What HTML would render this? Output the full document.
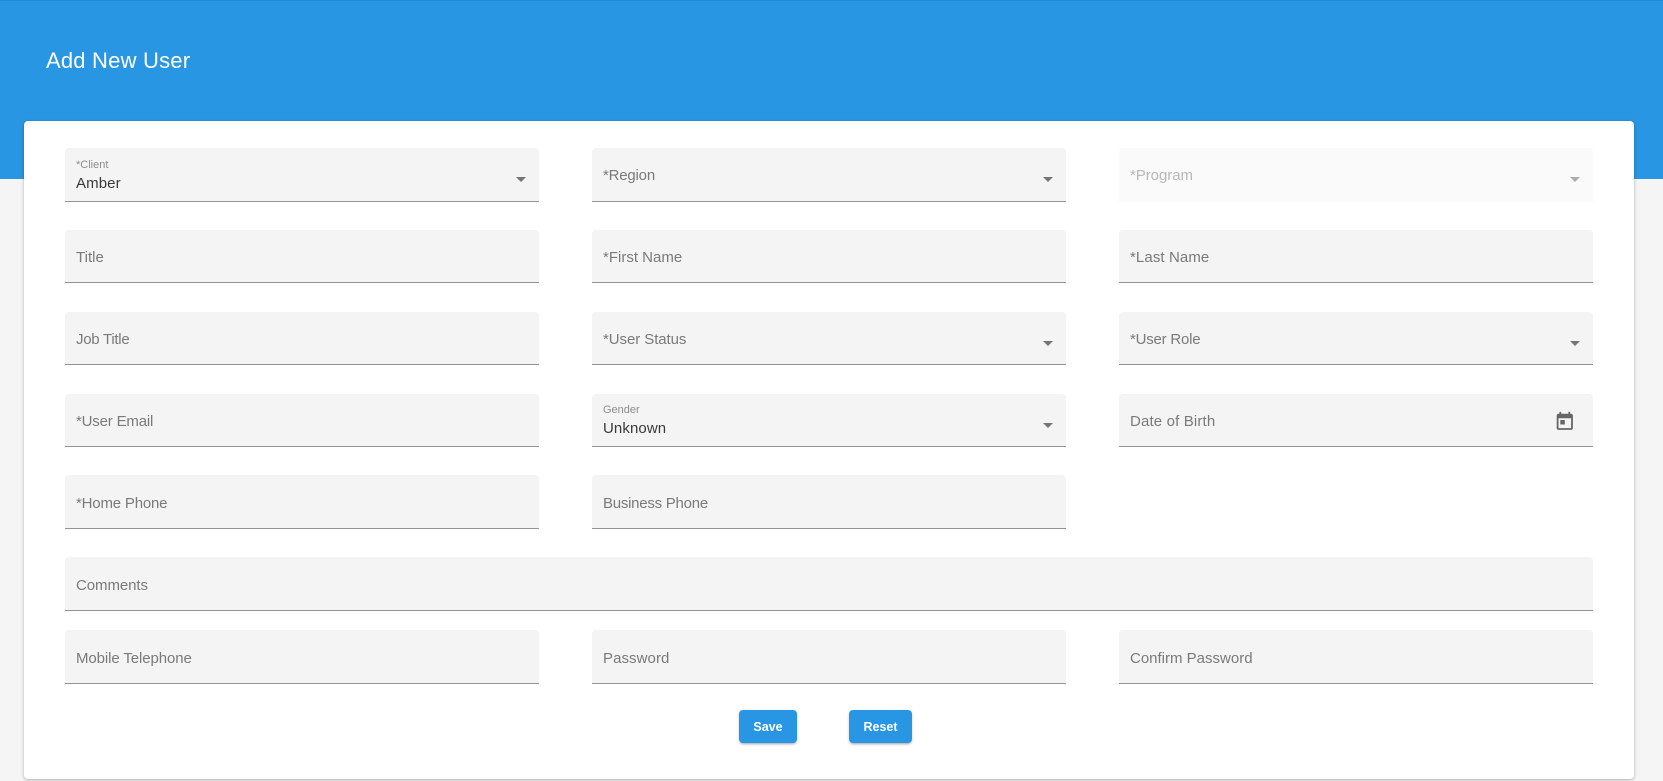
<!DOCTYPE html>
<html>
<head>
<meta charset="utf-8">
<title>Add New User</title>
<style>
html,body{margin:0;padding:0;width:1663px;height:781px;overflow:hidden;background:#f5f5f5;font-family:"Liberation Sans",sans-serif}
.hdr{position:absolute;left:0;top:0;width:1663px;height:179px;background:#2996e3;border-top:1px solid #2289d4;box-sizing:border-box}
.ttl{position:absolute;left:46px;top:47px;font-size:22px;line-height:26px;color:#fff;letter-spacing:.2px;white-space:nowrap}
.card{position:absolute;left:24px;top:121px;width:1610px;height:658px;background:#fff;border-radius:4px;box-shadow:0 1px 3px rgba(0,0,0,.3)}
.f{position:absolute;width:474px;height:54px;background:#f4f4f4;border-radius:4px 4px 0 0;border-bottom:1px solid #949494;box-sizing:border-box}
.s{height:53px}
.c1{left:65px}.c2{left:592px}.c3{left:1119px}
.f span{position:absolute;left:11px;top:1px;line-height:53px;font-size:15px;color:#7a7a7a;white-space:nowrap}
.f.sel span{top:0}
.f.dis{background:#fafafa;border-bottom:0}
.f.dis span{color:#b8b8b8}
.f i{position:absolute;right:13px;top:29px;width:0;height:0;border-left:5px solid transparent;border-right:5px solid transparent;border-top:5px solid #757575}
.f.dis i{border-top-color:#acacac}
.sm{position:absolute;left:11px;line-height:13px;font-size:11px;color:#8d8d8d}
.val{position:absolute;left:11px;line-height:18px;font-size:15px;color:#3a3a3a;letter-spacing:.1px}
.f svg{position:absolute;left:434.5px;top:17px}
.btn{position:absolute;top:710px;height:33px;background:#2996e3;border-radius:4px;color:#fff;font-size:12.5px;font-weight:bold;line-height:34px;text-align:center;box-shadow:0 2px 2px -1px rgba(0,0,0,.25),0 1px 3px rgba(0,0,0,.15)}
</style>
</head>
<body>
<div class="hdr"><div class="ttl">Add New User</div></div>
<div class="card"></div>

<div class="f sel c1" style="top:148px"><div class="sm" style="top:11px">*Client</div><div class="val" style="top:27px">Amber</div><i></i></div>
<div class="f sel c2" style="top:148px"><span style="top:1px;letter-spacing:-.2px">*Region</span><i></i></div>
<div class="f sel dis c3" style="top:148px"><span style="top:1px;letter-spacing:-.05px">*Program</span><i></i></div>

<div class="f s c1" style="top:230px"><span>Title</span></div>
<div class="f s c2" style="top:230px"><span>*First Name</span></div>
<div class="f s c3" style="top:230px"><span style="letter-spacing:.1px">*Last Name</span></div>

<div class="f s c1" style="top:312px"><span style="letter-spacing:-.27px">Job Title</span></div>
<div class="f s sel c2" style="top:312px"><span style="top:1px;letter-spacing:-.07px">*User Status</span><i></i></div>
<div class="f s sel c3" style="top:312px"><span style="top:1px;letter-spacing:-.22px">*User Role</span><i></i></div>

<div class="f s c1" style="top:394px"><span style="letter-spacing:-.18px">*User Email</span></div>
<div class="f s sel c2" style="top:394px"><div class="sm" style="top:10px">Gender</div><div class="val" style="top:26px">Unknown</div><i></i></div>
<div class="f s c3" style="top:394px"><span style="letter-spacing:.15px">Date of Birth</span>
<svg width="21.6" height="21.6" viewBox="0 0 24 24"><path fill="#666" d="M19 3h-1V1h-2v2H8V1H6v2H5c-1.11 0-1.99.9-1.99 2L3 19c0 1.1.89 2 2 2h14c1.1 0 2-.9 2-2V5c0-1.1-.9-2-2-2zm0 16H5V8h14v11zM7 10h5v5H7z"/></svg></div>

<div class="f c1" style="top:475px"><span style="top:2px;letter-spacing:-.19px">*Home Phone</span></div>
<div class="f c2" style="top:475px"><span style="top:2px;letter-spacing:-.25px">Business Phone</span></div>

<div class="f c1" style="top:557px;width:1528px"><span style="top:2px;letter-spacing:-.07px">Comments</span></div>

<div class="f c1" style="top:630px"><span style="top:2px;letter-spacing:-.1px">Mobile Telephone</span></div>
<div class="f c2" style="top:630px"><span style="top:2px;letter-spacing:.07px">Password</span></div>
<div class="f c3" style="top:630px"><span style="top:2px">Confirm Password</span></div>

<div class="btn" style="left:739px;width:58px">Save</div>
<div class="btn" style="left:849px;width:63px">Reset</div>
</body>
</html>
